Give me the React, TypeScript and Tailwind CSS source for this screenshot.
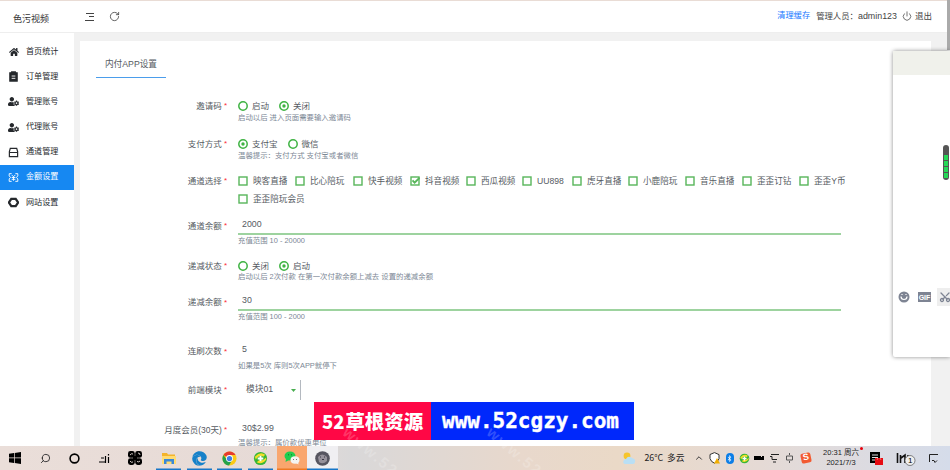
import React from "react";
import { FaHome, FaUserCog, FaWeixin, FaEdge, FaBluetoothB } from "react-icons/fa";
import { Search, Power, RotateCw, Scissors, ChevronUp } from "lucide-react";

const nav = ["首页统计", "订单管理", "管理账号", "代理账号", "通道管理", "金额设置", "网站设置"];

function NavIcon({ i }: { i: number }) {
  if (i === 0) return <FaHome size={10} />;
  if (i === 2 || i === 3) return <FaUserCog size={11} />;
  return (
    <svg width="11" height="11" viewBox="0 0 12 12" fill="none" stroke="currentColor" strokeWidth="1.3">
      {i === 1 && (
        <>
          <path d="M2 2h8v9H2zM4 1h4v2H4z" fill="currentColor" />
          <path d="M4 5.5h4M4 8h4" stroke="white" strokeWidth="1" />
        </>
      )}
      {i === 4 && <path d="M2.5 1.5h7l1 3.5v5.5h-9V5zM1.5 6h9" />}
      {i === 5 && (
        <path d="M4 1.8H1.3v2.4l1.4 1.8-1.4 1.6v2.6H4M8 1.8h2.7v2.4L9.3 6l1.4 1.6v2.6H8M4 3.2l2 2 2-2M4 6h4M4 8h4M6 5v4.5" strokeWidth="1" />
      )}
      {i === 6 && <path d="M3.6 2h4.8L11 6 8.4 10H3.6L1 6z" strokeWidth="2.5" />}
    </svg>
  );
}

function Radio({ on, text }: { on?: boolean; text: string }) {
  return (
    <span className="mr-[10px] flex items-center gap-[4px]">
      <svg width="10" height="10" viewBox="0 0 10 10">
        <circle cx="5" cy="5" r="4.2" fill="none" stroke="#3fb343" strokeWidth="1.5" />
        {on && <circle cx="5" cy="5" r="1.7" fill="#3fb343" />}
      </svg>
      {text}
    </span>
  );
}

function Check({ on, text, w }: { on?: boolean; text: string; w: string }) {
  return (
    <span className={`flex h-4 shrink-0 items-center gap-[5px] whitespace-nowrap ${w}`}>
      <svg width="10" height="10" viewBox="0 0 10 10" fill="none" stroke="#58b65b" className="shrink-0">
        <rect x="1" y="1" width="8" height="8" strokeWidth="1.4" />
        {on && <path d="M2.5 4.4l2.1 2.3 5-5" strokeWidth="1.9" />}
      </svg>
      {text}
    </span>
  );
}

function Row({ label, h, hint, gap = "", shift = "", children }: {
  label: string; h: string; hint?: string; gap?: string; shift?: string; children: React.ReactNode;
}) {
  return (
    <div className={`flex shrink-0 ${h}`}>
      <div className={`flex h-4 w-[147px] shrink-0 items-center justify-end ${shift}`}>
        {label}
        <span className="ml-[2px] text-[8px] text-red-500">*</span>
      </div>
      <div className="ml-[11px] w-[620px]">
        {children}
        {hint && <div className={`h-2 text-[7.4px] leading-[8px] text-[#7c8795] ${gap}`}>{hint}</div>}
      </div>
    </div>
  );
}

const channels: [string, string][] = [
  ["映客直播", "w-[57px]"], ["比心陪玩", "w-[58px]"], ["快手视频", "w-[57px]"], ["抖音视频", "w-[56px]"],
  ["西瓜视频", "w-[56px]"], ["UU898", "w-[50px]"], ["虎牙直播", "w-[56px]"], ["小鹿陪玩", "w-[57px]"],
  ["音乐直播", "w-[57px]"], ["歪歪订钻", "w-[57px]"], ["歪歪Y币", "w-[50px]"],
];

function Slot({ w, className = "", children }: { w: string; className?: string; children?: React.ReactNode }) {
  return <div className={`flex h-full shrink-0 items-center justify-center ${w} ${className}`}>{children}</div>;
}

function GreenBall({ size }: { size: number }) {
  return (
    <svg width={size} height={size} viewBox="0 0 16 16">
      <circle cx="8" cy="8" r="7" fill="#36b637" />
      <path d="M2 6Q8 0 13 4L11 6Q7 3 3 9zM14 9Q10 15 4 12l2-2q5 1 8-3z" fill="#f4de28" />
      <path d="M8 5v6M5 8h6" stroke="white" strokeWidth="2" />
    </svg>
  );
}

function Taskbar() {
  return (
    <footer className="flex h-6 w-[950px] shrink-0 bg-[linear-gradient(90deg,#eaded9_0%,#e6dad6_30%,#d9d8d9_37%,#e8d8cc_55%,#ead9c7_65%,#e5dad5_80%,#d5dcea_100%)] text-[#1b1b1d]">
      <Slot w="w-[30px]">
        <svg width="12" height="12" viewBox="0 0 12 12"><path d="M0 1.7L5 1v4.6H0zM5.7.9L12 0v5.6H5.7zM0 6.3h5V11l-5-.7zM5.7 6.3H12V12l-6.3-.9z" /></svg>
      </Slot>
      <Slot w="w-[30px]"><Search size={11} strokeWidth={1.8} className="-scale-x-100" /></Slot>
      <Slot w="w-[29px]"><svg width="11" height="11" viewBox="0 0 11 11"><circle cx="5.5" cy="5.5" r="4.4" fill="none" stroke="black" strokeWidth="1.6" /></svg></Slot>
      <Slot w="w-[30px]">
        <svg width="11" height="11" viewBox="0 0 11 11" fill="none" stroke="black"><path d="M2 5h3M0 9h6M6.5 3v7M9.5 1v1.5M9.5 4v6" strokeWidth="1.2" /></svg>
      </Slot>
      <Slot w="w-[32px]">
        <svg width="14" height="14" viewBox="0 0 14 14">
          <rect x="0" y="0" width="6.8" height="6.8" rx="2.4" /><rect x="7.2" y="0" width="6.8" height="6.8" rx="2.4" />
          <rect x="0" y="7.2" width="6.8" height="6.8" rx="2.4" /><rect x="7.2" y="7.2" width="6.8" height="6.8" rx="2.4" />
          <path d="M7 5v4M5 7h4" stroke="black" strokeWidth="2" />
          <path d="M2 4q1.5-2 3-1M10 2q2 0 2 2M2 10q1 2 3 1M9 10.5q2 1 3-.5" stroke="#e8dcd8" strokeWidth=".9" fill="none" />
        </svg>
      </Slot>
      <Slot w="w-[5px]" />
      <Slot w="w-[25px]" className="shadow-[inset_0_-1.5px_0_#1676c8]">
        <svg width="14" height="13" viewBox="0 0 14 13"><path d="M0 1h5l1 1.5h7V12H0z" fill="#f4b42b" /><path d="M0 4h14v8H0z" fill="#ffdc73" /><path d="M2 7h10v5H9.5V9.5h-5V12H2z" fill="#3988d8" /></svg>
      </Slot>
      <Slot w="w-[6px]" />
      <Slot w="w-[25px]" className="text-[#1681c9] shadow-[inset_0_-1.5px_0_#1676c8]"><FaEdge size={15} /></Slot>
      <Slot w="w-[5px]" />
      <Slot w="w-[25px]" className="shadow-[inset_0_-1.5px_0_#1676c8]">
        <svg width="15" height="15" viewBox="0 0 16 16">
          <circle cx="8" cy="8" r="7.5" fill="#fbc916" />
          <path d="M8 8L1.5 4.2A7.5 7.5 0 0 1 14.5 4.2H8z" fill="#e63b2e" />
          <path d="M1.5 4.2A7.5 7.5 0 0 0 7.5 15.5L10.5 10 5 9z" fill="#24a14b" />
          <circle cx="8" cy="8" r="3.7" fill="white" /><circle cx="8" cy="8" r="2.8" fill="#3e7fe6" />
        </svg>
      </Slot>
      <Slot w="w-[6px]" />
      <Slot w="w-[25px]" className="shadow-[inset_0_-1.5px_0_#1676c8]"><GreenBall size={15} /></Slot>
      <Slot w="w-[4px]" />
      <Slot w="w-[30px]" className="bg-[#f9a66e] shadow-[inset_0_-1.5px_0_#ee7924]"><span className="flex">
        <svg width="16" height="14" viewBox="0 0 16 14">
          <ellipse cx="6" cy="5" rx="5.5" ry="4.5" fill="#21ce4e" /><path d="M2 8L1.5 11 5 9z" fill="#21ce4e" />
          <ellipse cx="11" cy="9" rx="4.5" ry="3.7" fill="#f4f4f1" /><path d="M12 12l2.5 1.5L14 10z" fill="#f4f4f1" />
          <path d="M4 3.8h1M7 3.8h1" stroke="#17682d" /><path d="M9 8.5h1M12 8.5h1" stroke="#777" />
        </svg></span>
      </Slot>
      <Slot w="w-[31px]" className="bg-[#f0eff2] shadow-[inset_0_-1.5px_0_#1676c8]">
        <svg width="15" height="15" viewBox="0 0 15 15"><circle cx="7.5" cy="7.5" r="7.3" fill="#565560" /><path d="M3 6Q7 1 12 6v4q-4 4-8 1z" fill="#96919b" /><path d="M5 6h1M9 6h1M7 8.5h2" stroke="#393643" /></svg>
      </Slot>
      <Slot w="w-[284px]" />
      <Slot w="w-[14px]">
        <svg width="14" height="13" viewBox="0 0 14 13"><circle cx="5" cy="4" r="3.4" fill="#f6c52c" /><path d="M3 12q-3-1-1-4 1-1 2-1 2-4 6-1 4 1 3 4 0 2-2 2z" fill="#b9dff4" /></svg>
      </Slot>
      <Slot w="w-[57px]" className="font-['Noto_Sans_CJK_SC',sans-serif] text-[8.8px] whitespace-pre">26°C  多云</Slot>
      <Slot w="w-[12px]"><ChevronUp size={10} /></Slot>
      <Slot w="w-[18px]">
        <svg width="11" height="12" viewBox="0 0 11 12"><path d="M5.5.6l4.5 2v4q-1 3-4.5 4.6Q2 10 1 6.5v-4z" fill="white" stroke="#333" /><path d="M8 6l3 5.5H5z" fill="#f0ad00" /></svg>
      </Slot>
      <Slot w="w-[13px]"><span className="flex h-[11px] w-2 items-center justify-center rounded-full bg-[#0c7ee7] text-white"><FaBluetoothB size={7} /></span></Slot>
      <Slot w="w-[16px]"><GreenBall size={11} /></Slot>
      <Slot w="w-[14px]"><svg width="10" height="6" viewBox="0 0 10 6"><path d="M0 1h7v1h1V1h2v4H0z" /></svg></Slot>
      <Slot w="w-[15px]"><svg width="10" height="10" viewBox="0 0 10 10" fill="none" stroke="#222"><path d="M2 1.5h8M1 3.5h2v3h5M4 9h3" /></svg></Slot>
      <Slot w="w-[16px]"><svg width="9" height="10" viewBox="0 0 9 10" fill="none" stroke="#555"><path d="M1.5 3h6v4h-6zM4.5 0v2M4.5 8v2" /></svg></Slot>
      <Slot w="w-[18px]"><span className="flex h-[10px] w-[10px] -rotate-12 items-center justify-center rounded-[2px] bg-[#f25a31] text-[9px] font-bold text-white">S</span></Slot>
      <div className="flex w-[52px] shrink-0 flex-col items-center justify-center text-[7.5px] leading-[10px] whitespace-nowrap">
        <span className="relative">20:31 周六<i className="absolute -top-px -right-[4px] h-[3px] w-[3px] rounded-full bg-red-600" /></span>
        <span>2021/7/3</span>
      </div>
      <Slot w="w-[27px]" className="-ml-[4px] mr-[1px]">
        <svg width="14" height="15" viewBox="0 0 14 15"><path d="M0 1h10v11H0z" /><path d="M2 4h6M2 6.5h6M2 9h3" stroke="#ddd" /><path d="M5 7h8v7H5z" fill="#e60b12" /><path d="M7 9l1-2M11 9l-1-2" stroke="#f66" /></svg>
      </Slot>
      <Slot w="w-[30px]">
        <svg width="20" height="16" viewBox="0 0 20 16"><path d="M1.5 3v10M4.5 5v8M5 8l4-3v8M12 5v8" fill="none" stroke="#111" strokeWidth="1.6" /><circle cx="14" cy="10.5" r="5" fill="#eee" stroke="#555" strokeWidth=".7" /><text x="12" y="13.2" fontSize="8" fontFamily="Liberation Sans, sans-serif">1</text></svg>
      </Slot>
      <Slot w="w-[24px]"><svg width="11" height="11" viewBox="0 0 11 11" fill="none" stroke="#222"><path d="M1.5 9V1.5H10M4 7.5h2l1 2 2-2" /></svg></Slot>
    </footer>
  );
}

export default function App() {
  return (
    <div className="relative flex h-[470px] w-[950px] flex-col overflow-hidden bg-white font-['Liberation_Sans','Noto_Sans_CJK_SC',sans-serif] text-[8.5px] text-[#565b62]">
      <header className="flex h-[33px] shrink-0 items-center border-t border-b border-t-[#e9dcd5] border-b-[#eee]">
        <div className="w-[85px] pt-[6px] pl-[13px] text-[9px] text-[#333]">色污视频</div>
        <svg width="10" height="10" viewBox="0 0 10 10" fill="none" stroke="#444"><path d="M1 1.5h8M4 4.5h5M0 8.5h9" strokeWidth="1" /></svg>
        <RotateCw size={11} strokeWidth={1.8} className="ml-[14px] text-[#444]" />
        <div className="ml-auto flex items-center pr-[18px] text-[#444]">
          <span className="mr-[6px] text-[8.2px] text-[#1677ff]">清理缓存</span>
          <span className="mr-[5px] text-[8.4px]">管理人员：<span className="text-[8.9px]">admin123</span></span>
          <Power size={10} strokeWidth={1.8} className="mr-[3px]" />
          <span>退出</span>
        </div>
      </header>

      <div className="flex h-[413px] shrink-0 overflow-hidden">
        <nav className="w-[74px] shrink-0 bg-white pt-[6px]">
          {nav.map((t, i) => (
            <div key={i} className={`flex h-[25.2px] items-center gap-[7px] pl-[8px] text-[8.1px] ${i === 5 ? "bg-[#1688f2] text-white" : "text-[#25282c]"}`}>
              <span className="flex w-[11px] justify-center"><NavIcon i={i} /></span>
              {t}
            </div>
          ))}
        </nav>
        <main className="flex grow bg-[#f1f1f1] pt-2 pr-[19px] pl-[6px]">
          <section className="flex w-full flex-col overflow-hidden bg-white">
            <div className="ml-4 flex h-[37px] w-[70px] shrink-0 items-center justify-center pt-[10px] text-[8.7px] shadow-[inset_0_-1px_0_#4b9deb]">内付APP设置</div>
            <div className="h-5 shrink-0" />
            <Row label="邀请码" h="h-[38px]" hint="启动以后 进入页面需要输入邀请码">
              <div className="flex h-4 items-center"><Radio text="启动" /><Radio text="关闭" on /></div>
            </Row>
            <Row label="支付方式" h="h-[37px]" hint="温馨提示：支付方式 支付宝或者微信">
              <div className="flex h-4 items-center"><Radio text="支付宝" on /><Radio text="微信" /></div>
            </Row>
            <Row label="通道选择" h="h-[44px]">
              <div className="flex flex-wrap gap-y-[2px] text-[8.6px]">
                {channels.map(([t, w]) => <Check key={t} text={t} w={w} on={t === "抖音视频"} />)}
                <Check text="歪歪陪玩会员" w="w-[90px]" />
              </div>
            </Row>
            <Row label="通道余额" h="h-[41px]" shift="pt-[2px]" gap="mt-[2px]" hint="充值范围 10 - 20000">
              <div className="flex h-[18px] w-[603px] items-center border-b-2 border-[#9dd39f] pb-px pl-[4px] text-[8.8px]">2000</div>
            </Row>
            <Row label="递减状态" h="h-[35px]" gap="-mt-px" hint="启动以后 2次付款 在第一次付款余额上减去 设置的递减余额">
              <div className="flex h-4 items-center"><Radio text="关闭" /><Radio text="启动" on /></div>
            </Row>
            <Row label="递减余额" h="h-[49px]" shift="pt-[3px]" gap="mt-[2px]" hint="充值范围 100 - 2000">
              <div className="flex h-[18px] w-[603px] items-center border-b-2 border-[#9dd39f] pl-[4px] text-[8.8px]">30</div>
            </Row>
            <Row label="连刷次数" h="h-[38px]" shift="pt-[3px]" gap="mt-[4px]" hint="如果是5次 库则5次APP就停下">
              <div className="flex h-4 items-center pl-[4px] text-[8.8px]">5</div>
            </Row>
            <Row label="前端模块" h="h-[41px]" shift="pt-[4px]">
              <div className="flex h-5 w-[63px] items-center justify-between border-r border-[#b4b9c0] pr-[4px] pl-[8px] text-[8.7px]">
                模块01
                <svg width="5" height="3"><path d="M0 0h5L2.5 3z" fill="#48ae50" /></svg>
              </div>
            </Row>
            <Row label="月度会员(30天)" h="h-[34px]" shift="pt-[2px]" gap="mt-[2px]" hint="温馨提示：属价款优惠单位">
              <div className="flex h-4 items-center pl-[4px] text-[8.8px]">30$2.99</div>
            </Row>
          </section>
        </main>
      </div>
      <Taskbar />

      <div className="absolute top-0 right-0 h-[50px] w-[3px] bg-[#aaa]" />
      <aside className="absolute top-[51px] right-0 h-[306px] w-[57px] rounded-l-[2px] bg-white shadow-[0_0_4px_rgba(0,0,0,0.45)]">
        <div className="h-6 bg-[#f0f1eb]" />
        <div className="mt-[70px] ml-auto mr-px flex h-[35px] w-[6px] flex-col justify-end gap-px rounded-full bg-[#555] pb-[2px]">
          {[0, 1, 2, 3].map((i) => <span key={i} className="mx-px h-[5px] bg-[#25d957]" />)}
        </div>
        <div className="mt-[108px] flex h-[18px] items-center text-[#7e8493]">
          <svg width="12" height="12" viewBox="0 0 12 12" className="ml-[5px]"><circle cx="6" cy="6" r="5.5" fill="currentColor" /><path d="M3 5.5q0 3 3 3t3-3M4 3v1M8 3v1" stroke="white" fill="none" strokeWidth="1.2" /></svg>
          <span className="ml-[8px] flex h-[10px] w-[13px] items-center justify-center bg-[#7e8493] text-[7px] leading-none font-bold text-white">GIF</span>
          <span className="ml-[6px] flex h-[18px] w-[13px] items-center overflow-hidden bg-[#eee] pl-[2px]"><Scissors size={12} strokeWidth={2.6} className="shrink-0 -rotate-90" /></span>
        </div>
      </aside>

      <div className="absolute top-[402px] left-[314px] flex h-[38px] w-[320px] items-center bg-[#0028fb] text-white">
        <div className="flex h-full w-[117px] items-center justify-center bg-[#ff0745] font-['Noto_Sans_CJK_SC',sans-serif] text-[19.4px] leading-none font-black whitespace-nowrap">
          <span className="mr-px text-[18.5px]">52</span>草根资源
        </div>
        <div className="pl-[11px] font-['DejaVu_Sans_Mono',monospace] text-[21px] leading-none font-bold [-webkit-text-stroke:0.4px_white]">www.52cgzy.com</div>
      </div>
      <div className="pointer-events-none absolute top-[424px] left-[350px] origin-top-left rotate-[40deg] text-[15px] leading-none font-bold tracking-[2px] text-white/20">www.52</div>
      <div className="pointer-events-none absolute top-[424px] left-[494px] origin-top-left rotate-[40deg] text-[15px] leading-none font-bold tracking-[2px] text-white/20">www.52</div>
    </div>
  );
}
